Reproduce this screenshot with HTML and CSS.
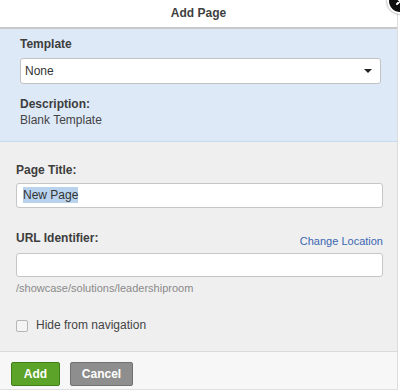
FILE: index.html
```html
<!DOCTYPE html>
<html lang="en">
  <head>
    <meta charset="UTF-8" />
    <meta name="viewport" content="width=device-width, initial-scale=1.0" />
    <title>Add Page</title>
    <link rel="stylesheet" href="styles.css">
  </head>
  <body>
    <div class="dialog">
      <div class="dialog-header">
        Add Page
        <span class="close">
          <svg width="10" height="10" viewBox="0 0 10 10"><path d="M2 2L8 8M8 2L2 8" stroke="#fff" stroke-width="2" stroke-linecap="round"/></svg>
        </span>
      </div>

      <div class="template-box">
        <div class="label">Template</div>
        <div class="select">
          <span>None</span>
          <span class="caret"></span>
        </div>
        <div class="label desc-label">Description:</div>
        <div class="desc">Blank Template</div>
      </div>

      <div class="form-box">
        <div class="label">Page Title:</div>
        <div class="field"><span class="selected">New Page</span></div>

        <div class="url-row">
          <span class="label">URL Identifier:</span>
          <a href="#" class="change-link">Change Location</a>
        </div>
        <div class="field field-url"></div>
        <div class="path">/showcase/solutions/leadershiproom</div>

        <label class="check-row">
          <span class="checkbox"></span>
          Hide from navigation
        </label>
      </div>

      <div class="dialog-footer">
        <button class="btn btn-add">Add</button>
        <button class="btn btn-cancel">Cancel</button>
      </div>
    </div>
  </body>
</html>
```

FILE: styles.css
```css
body {
  margin: 0;
  background-color: #fff;
  font-family: "Liberation Sans", Arial, sans-serif;
  color: #444;
}
.dialog {
  position: relative;
  width: 397px;
  border-right: 1px solid #dcdcdc;
}
.dialog-header {
  height: 27px;
  line-height: 27px;
  text-align: center;
  font-size: 12px;
  font-weight: bold;
  color: #3f3f3f;
  background-color: #fff;
  border-bottom: 2px solid #c9c9c9;
}
.close {
  position: absolute;
  top: -12px;
  right: -16px;
  display: flex;
  align-items: center;
  justify-content: center;
  width: 22px;
  height: 22px;
  border-radius: 50%;
  background-color: #111;
  border: 2px solid #fff;
  box-shadow: 0 0 2px #666;
}
.label {
  font-size: 12px;
  line-height: 15px;
  font-weight: bold;
  color: #3d3d3d;
}
.template-box {
  background-color: #dee9f8;
  padding: 8px 16px 13px 20px;
  border-bottom: 1px solid #c8daf0;
}
.select {
  display: flex;
  justify-content: space-between;
  align-items: center;
  height: 24px;
  margin-top: 6px;
  padding: 0 8px 0 4px;
  background-color: #fff;
  border: 1px solid #c3c3c3;
  border-radius: 3px;
  font-size: 12px;
  color: #333;
}
.caret {
  width: 0;
  height: 0;
  border-left: 4px solid transparent;
  border-right: 4px solid transparent;
  border-top: 4px solid #222;
}
.desc-label {
  margin-top: 13px;
}
.desc {
  font-size: 12px;
  line-height: 16px;
  color: #444;
}
.form-box {
  background-color: #efefef;
  padding: 21px 14px 18px 16px;
  border-bottom: 1px solid #dadada;
}
.field {
  height: 23px;
  margin-top: 5px;
  padding: 0 6px;
  background-color: #fff;
  border: 1px solid #c6c6c6;
  border-radius: 3px;
  font-size: 12px;
  line-height: 23px;
  color: #333;
}
.selected {
  background-color: #b9d3ee;
  padding: 1px 0;
}
.url-row {
  display: flex;
  justify-content: space-between;
  align-items: flex-start;
  margin-top: 23px;
}
.change-link {
  margin-top: 3px;
  font-size: 11px;
  line-height: 15px;
  color: #3b67b3;
  text-decoration: none;
}
.field-url {
  height: 22px;
  margin-top: 4px;
}
.path {
  margin-top: 4px;
  font-size: 11px;
  line-height: 14px;
  color: #8a8a8a;
}
.check-row {
  display: flex;
  align-items: center;
  gap: 8px;
  margin-top: 23px;
  font-size: 12px;
  line-height: 15px;
  color: #444;
}
.checkbox {
  width: 10px;
  height: 10px;
  border: 1px solid #b5b5b5;
  border-radius: 2px;
  background-color: #f4f4f4;
}
.dialog-footer {
  display: flex;
  gap: 10px;
  padding: 10px 11px 3px;
  background-color: #f7f7f7;
  border-bottom: 1px solid #e0e0e0;
}
.btn {
  height: 24px;
  padding: 0;
  font-family: "Liberation Sans", Arial, sans-serif;
  font-size: 12px;
  font-weight: bold;
  color: #fff;
  border-radius: 2px;
}
.btn-add {
  width: 49px;
  background-color: #5ca329;
  border: 1px solid #3f7f18;
}
.btn-cancel {
  width: 63px;
  background-color: #8e8e8e;
  border: 1px solid #717171;
}
```
